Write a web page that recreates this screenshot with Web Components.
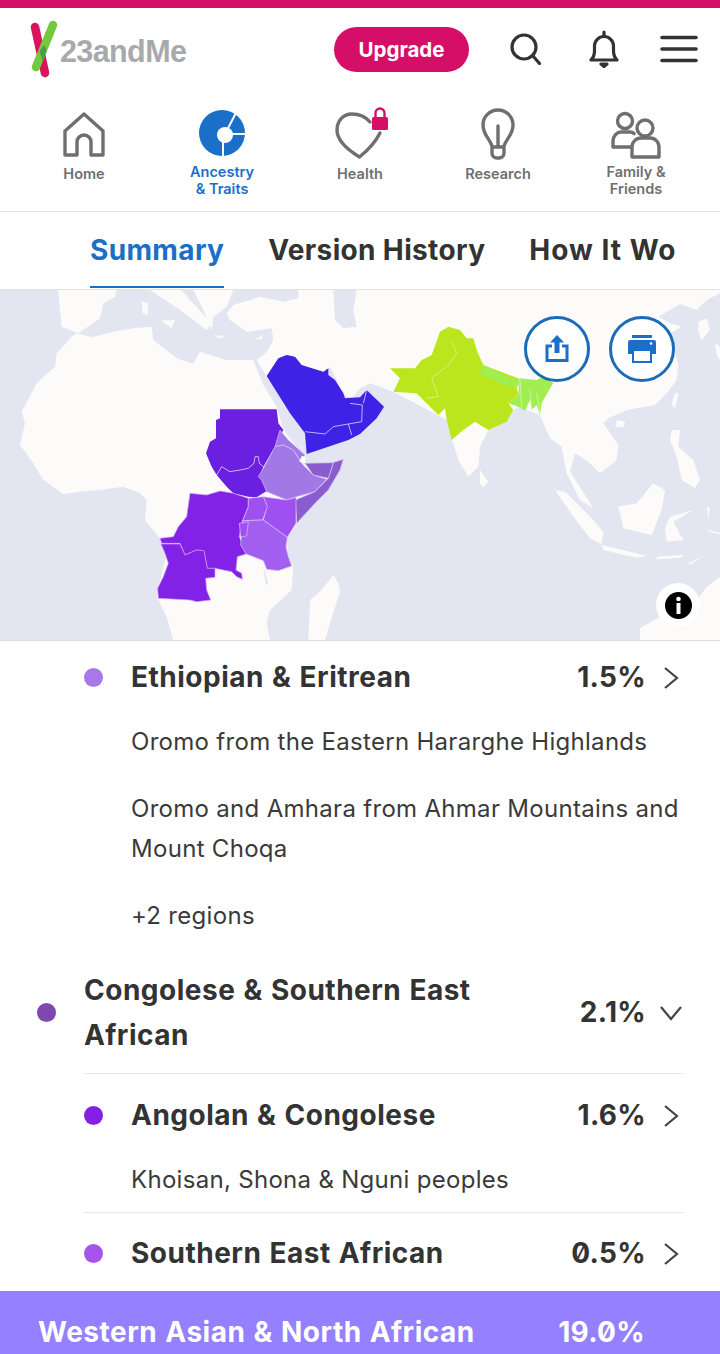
<!DOCTYPE html>
<html>
<head>
<meta charset="utf-8">
<title>Ancestry</title>
<style>
html, body { margin: 0; height: 1354px; overflow: hidden; background: #fff; }
body { font-family: Inter, "Liberation Sans", sans-serif; color: #333; }
.nav-icon { display: block; fill: none; overflow: visible; stroke: #6f6f6f; stroke-width: 3.4; stroke-linejoin: round; stroke-linecap: round; }
</style>
</head>
<body>
<app-header></app-header>
<nav-bar>
    <nav-item label="Home">
        <svg class="nav-icon" width="60" height="52" viewBox="0 0 60 52"><path d="M11 44V20L30 3l19 17v24H37V31a7 7 0 0 0-14 0v13z"/></svg>
    </nav-item>
    <nav-item label="Ancestry<br>&amp; Traits" active>
        <svg width="60" height="52" viewBox="0 0 60 52" style="display:block;overflow:visible">
            <circle cx="30" cy="22" r="23" fill="#1a70c8"/>
            <circle cx="33" cy="24" r="8" fill="#fff"/>
            <path d="M31 24v24M33 23h24M33 23L46 -2" stroke="#fff" stroke-width="2" fill="none"/>
        </svg>
    </nav-item>
    <nav-item label="Health">
        <svg class="nav-icon" width="60" height="52" viewBox="0 0 60 52"><path d="M40 11C35 5 29 3 22 3 13 3 7 10 7 19c0 10 11 20 22.500 27C37 40 45 32 50 22"/><rect x="42" y="6" width="16" height="13" rx="1.500" fill="#d50f67" stroke="none"/><path d="M45.500 7V2a4.500 4.500 0 0 1 9 0v5" stroke="#d50f67" stroke-width="2.400"/></svg>
    </nav-item>
    <nav-item label="Research">
        <svg class="nav-icon" width="60" height="52" viewBox="0 0 60 52"><path d="M24 35c-2-7-9-11-9-21a15 15 0 0 1 30 0c0 10-7 14-9 21v7a5 5 0 0 1-5 5h-2a5 5 0 0 1-5-5zM30 15v21M24 36h12"/></svg>
    </nav-item>
    <nav-item label="Family &amp;<br>Friends">
        <svg class="nav-icon" width="60" height="52" viewBox="0 0 60 52"><circle cx="19" cy="10" r="7.500"/><circle cx="39" cy="17" r="8"/><path d="M26 36H7v-6c0-5 4-9 8-9h9c1.500 0 3 .5 4 1.500M26 46V36c0-5 4-9 9-9h9c5 0 9 4 9 9v10z"/></svg>
    </nav-item>
</nav-bar>
<tab-bar>
    <tab-link active>Summary</tab-link>
    <tab-link>Version History</tab-link>
    <tab-link style="letter-spacing:1px">How It Works</tab-link>
</tab-bar>
<ancestry-map></ancestry-map>
<ancestry-list>
    <ancestry-row dot="#a678e8" pct="1.5%" indent>Ethiopian &amp; Eritrean</ancestry-row>
    <ancestry-note>Oromo from the Eastern Hararghe Highlands</ancestry-note>
    <ancestry-note>Oromo and Amhara from Ahmar Mountains and Mount Choqa</ancestry-note>
    <ancestry-note>+2 regions</ancestry-note>
    <ancestry-row dot="#7f47b0" pct="2.1%" open>Congolese &amp; Southern East African</ancestry-row>
    <ancestry-row dot="#8420e6" pct="1.6%" indent ruled first>Angolan &amp; Congolese</ancestry-row>
    <ancestry-note tight>Khoisan, Shona &amp; Nguni peoples</ancestry-note>
    <ancestry-row dot="#a555ec" pct="0.5%" indent ruled>Southern East African</ancestry-row>
</ancestry-list>
<ancestry-band pct="19.0%">Western Asian &amp; North African</ancestry-band>

<script>
class AppHeader extends HTMLElement {
    constructor() {
        super();
        this.attachShadow({mode: 'open'});
        this.shadowRoot.innerHTML = `
        <style>
        :host { display: block; border-top: 8px solid #d50f67; }
        .row { align-items: center; display: flex; height: 82px; padding-left: 29px; }
        .logo { align-items: center; display: flex; flex-grow: 1; padding-top: 2px; }
        .word { color: #a7a9ac; font-family: 'Liberation Sans', sans-serif; font-size: 30.5px; font-weight: 700; letter-spacing: -0.6px; margin-left: -1px; margin-top: 3px; }
        .upgrade { align-items: center; background: #d50f67; border-radius: 23px; color: #fff; display: flex; font-size: 20.5px; font-weight: 700; height: 45px; justify-content: center; margin-right: 41px; width: 135px; }
        svg.tool { display: block; fill: none; stroke: #333; stroke-width: 3.2; stroke-linecap: round; stroke-linejoin: round; }
        .search { margin-right: 47px; }
        .bell { margin-right: 40px; }
        </style>
        <div class="row">
            <div class="logo">
                <svg width="32" height="58" viewBox="0 0 32 58"><path d="M6 6l10 46" stroke="#d9145f" stroke-width="8.500" stroke-linecap="round"/><path d="M24 4L7 46" stroke="#74c83f" stroke-width="8.500" stroke-linecap="round"/><path d="M10.500 30l3.500 11 3.500-11 -2-6z" fill="#4a9a4f"/></svg>
                <span class="word">23andMe</span>
            </div>
            <div class="upgrade">Upgrade</div>
            <svg class="tool search" width="31" height="32" viewBox="0 0 31 32"><circle cx="14" cy="14" r="12"/><path d="M23 23l6.500 7.500"/></svg>
            <svg class="tool bell" width="32" height="38" viewBox="0 0 32 38"><path d="M3 30c3-3 3.500-5 3.500-9v-5a9.500 9.500 0 0 1 19 0v5c0 4 .5 6 3.500 9z"/><path d="M16 2v4"/><path d="M13 34h6l-3 2.500z" fill="#333"/></svg>
            <svg class="tool" width="38" height="28" viewBox="0 0 38 28" style="stroke-width:3.600"><path d="M2 2.500h34M2 14h34M2 25.500h34"/></svg>
            <span style="width:22px"></span>
        </div>`;
    }
}
customElements.define('app-header', AppHeader);

class NavBar extends HTMLElement {
    constructor() {
        super();
        this.attachShadow({mode: 'open'});
        this.shadowRoot.innerHTML = `
        <style>
        :host { border-bottom: 1px solid #e4e4e4; display: grid; grid-template-columns: repeat(5, 138px); height: 121px; padding: 0 15px; }
        </style>
        <slot></slot>`;
    }
}
customElements.define('nav-bar', NavBar);

class NavItem extends HTMLElement {
    constructor() {
        super();
        this.attachShadow({mode: 'open'});
        this.shadowRoot.innerHTML = `
        <style>
        :host { align-items: center; display: flex; flex-direction: column; padding-top: 21px; }
        .label { color: #6f6f6f; font-size: 14.5px; font-weight: 600; line-height: 17px; text-align: center; }
        .label.single { margin-top: 1.5px; }
        :host([active]) .label { color: #1a70c8; }
        </style>
        <slot></slot>
        <div class="label"></div>`;
    }

    connectedCallback() {
        const label = this.shadowRoot.querySelector('.label');
        const text = this.getAttribute('label');
        label.innerHTML = text;
        if(!text.includes('<br>'))
            label.classList.add('single');
    }
}
customElements.define('nav-item', NavItem);

class TabBar extends HTMLElement {
    constructor() {
        super();
        this.attachShadow({mode: 'open'});
        this.shadowRoot.innerHTML = `
        <style>
        :host { border-bottom: 1px solid #e4e4e4; box-sizing: border-box; display: block; height: 78px; overflow: hidden; padding-right: 44px; }
        .scroll { column-gap: 44px; display: flex; height: 100%; overflow: hidden; padding-left: 90px; }
        </style>
        <div class="scroll"><slot></slot></div>`;
    }
}
customElements.define('tab-bar', TabBar);

class TabLink extends HTMLElement {
    constructor() {
        super();
        this.attachShadow({mode: 'open'});
        this.shadowRoot.innerHTML = `
        <style>
        :host { align-items: center; border-bottom: 2px solid transparent; box-sizing: border-box; color: #333; display: flex; flex-shrink: 0; font-size: 28px; font-weight: 700; height: 76px; letter-spacing: .35px; padding-top: 2px; white-space: nowrap; }
        :host([active]) { border-bottom-color: #1a70c8; color: #1a70c8; }
        </style>
        <slot></slot>`;
    }
}
customElements.define('tab-link', TabLink);

class AncestryMap extends HTMLElement {
    constructor() {
        super();
        this.attachShadow({mode: 'open'});
        this.shadowRoot.innerHTML = `
        <style>
        :host { background: #e3e6f1; border-bottom: 1px solid #dcdcdc; display: block; height: 350px; overflow: hidden; position: relative; }
        svg.map { display: block; }
        .land { fill: #fcfbfa; }
        .sea { fill: #e3e6f1; }
        .line { fill: none; stroke: #ffffff; stroke-opacity: .65; stroke-width: 3; }
        .round { align-items: center; background: #fff; border: 3px solid #1a6cb8; border-radius: 50%; box-sizing: border-box; display: flex; height: 66px; justify-content: center; position: absolute; top: 26px; width: 66px; }
        .info { align-items: center; background: #fff; border-radius: 50%; display: flex; height: 44px; justify-content: center; left: 656px; position: absolute; top: 293px; width: 44px; }
        </style>
        <svg class="map" width="720" height="350" viewBox="0 0 2160 1050">
            <g class="land">
                <path d="M230 130L275 142 340 125 400 115 455 110 460 150 530 205 580 222 600 185 680 210 760 210 790 285 830 350 850 420 910 495 900 520 960 530 1030 510 1000 570 950 630 890 700 860 750 865 800 880 830 875 900 810 960 800 1000 810 1050 520 1050 500 980 470 920 490 830 500 800 480 745 435 690 440 630 420 610 370 590 300 600 240 605 190 612 130 570 100 520 60 465 75 400 65 365 110 280 165 230 170 190 215 140z"/>
                <path d="M1000 855L1015 880 1020 905 990 1000 975 1050 925 1050 930 930 960 905z"/>
                <path d="M175 0L350 0 345 20 310 40 300 85 235 130 185 110 180 60z"/>
                <path d="M450 0L540 60 620 120 635 100 570 30 545 0z"/>
                <path d="M580 0L700 0 680 50 640 80 635 120 610 60z"/>
                <path d="M425 35L445 40 443 75 428 70zM482 92L525 90 515 115z"/>
                <path d="M640 135L675 138 660 146zM765 148L790 135 785 148z"/>
                <path d="M680 70L700 45 780 20 850 35 895 25 895 0 2160 0 2160 10 2120 30 2090 60 2040 42 1975 80 2010 100 2045 110 2010 130 2035 225 2030 270 2000 310 1965 345 1880 360 1825 385 1810 400 1855 465 1850 510 1800 550 1770 520 1725 490 1710 545 1780 655 1740 630 1700 550 1685 470 1650 445 1620 375 1555 350 1465 420 1440 470 1435 530 1405 560 1375 510 1355 445 1340 390 1180 305 1110 280 1080 295 1060 320 1040 320 1025 300 990 230 985 235 900 400 800 260 770 210 800 185 820 150 815 115 740 125 690 90z"/>
                <path d="M2095 95L2120 85 2130 120 2105 150 2095 125zM2145 160L2160 170 2160 210 2150 195z"/>
                <path d="M1850 390L1875 395 1870 410 1848 412zM2025 310L2035 310 2025 355 2015 345z"/>
                <path d="M1440 540L1465 575 1450 592 1440 580z"/>
                <path d="M1665 600L1695 605 1780 690 1810 725 1805 762 1770 745 1720 680z"/>
                <path d="M1805 765L1940 797 1910 803 1810 780z"/>
                <path d="M1960 580L1995 600 1985 660 1955 735 1870 715 1855 650 1910 640z"/>
                <path d="M1995 715L2010 680 2080 660 2020 695 2050 750 2000 755z"/>
                <path d="M2015 420L2040 420 2035 470 2080 510 2100 570 2085 595 2045 570 2030 500 2010 450z"/>
                <path d="M1970 800L2050 795 2045 803 1970 808zM2065 820L2110 797 2070 825zM2120 650L2130 655 2125 685zM2125 720L2160 728 2160 732 2125 725z"/>
                <path d="M1920 1050L1920 1015 1980 980 2080 945 2120 890 2160 860 2160 1050z"/>
            </g>
            <path class="sea" d="M1000 0L1070 0 1060 60 1070 110 1030 115 1005 90zM790 830L805 880 798 885 792 850z"/>

            <path fill="#4022e6" d="M835 205L860 195 885 200 905 225 970 245 985 235 985 255 1005 270 1030 310 1035 325 1080 322 1100 300 1152 350 1130 385 1080 432 1045 450 985 470 920 492 915 430 870 370 800 258z"/>
            <path class="line" d="M915 425L975 432 1000 410 1045 402 1055 435M1045 402L1085 395 1087 345 1050 340M1100 300L1090 340"/>

            <path fill="#6b1fe0" d="M660 358L830 358 835 400 850 420 825 470 790 530 785 545 805 600 770 622 745 620 700 610 680 590 650 555 635 530 618 490 630 455 648 445 648 390 660 385z"/>
            <path class="line" d="M650 555L665 530 690 545 720 540 745 535 762 520 765 500 775 500 778 520 790 530"/>
            <path fill="#8222e6" stroke="#c9a5f2" stroke-width="2" d="M570 610L620 615 660 603 700 610 745 625 745 650 725 700 718 740 738 792 712 800 708 840 725 850 727 868 710 860 695 845 645 835 622 835 612 785 590 780 555 795 540 760 485 760 480 745 520 740 535 710 560 680z"/>
            <path fill="#8222e6" stroke="#c9a5f2" stroke-width="2" d="M483 762L540 762 555 795 590 780 612 782 622 835 645 835 645 862 617 865 620 900 632 930 590 935 570 930 475 925 473 895 490 860 505 820 495 790z"/>
            <g stroke="#d8c4f5" stroke-width="2">
                <path fill="#a178e6" d="M840 420L865 450 915 495 900 510 880 480 850 465 825 470z"/>
                <path fill="#a178e6" d="M825 470L850 465 880 480 905 520 915 530 940 555 980 568 945 605 890 620 860 630 800 605 785 570 775 560 790 535z"/>
                <path fill="#8a5ccf" d="M915 520L960 530 1030 508 1020 540 985 600 945 640 890 700 886 630 945 605 985 565 1000 520z"/>
                <path fill="#8a5ccf" d="M915 520L1000 518 985 565 940 555z"/>
                <path fill="#a050f0" d="M790 620L860 630 888 622 888 700 862 742 790 690 800 650z"/>
                <path fill="#a050f0" d="M745 625L790 620 802 650 788 690 728 692 745 650z"/>
                <path fill="#a35ff0" d="M728 692L790 690 862 742 858 770 865 800 875 828 835 842 800 838 790 812 738 792 722 765z"/>
                <path fill="#a050f0" d="M718 700L745 695 740 738 722 740z"/>
            </g>
            <path fill="#fcfbfa" d="M905 498L918 500 915 520 898 515z"/>

            <g transform="translate(1080 0)">
                <path fill="#bbe51d" d="M240 125L265 110 300 120 320 145 340 145 352 185 370 225 475 265 470 290 475 315 445 340 460 360 440 395 385 420 345 395 310 420 275 450 260 390 255 355 235 375 205 345 170 310 100 305 120 265 90 235 165 235 185 210 215 195z"/>
                <path fill="#a0ee50" d="M370 225L450 265 478 268 475 290 430 285 360 250z"/>
                <path fill="#a0ee50" d="M478 265L530 270 545 262 580 278 545 340 540 375 530 345 515 360 510 330 495 362 475 350 445 340 475 315z"/>
                <path class="line" style="stroke-width:2" d="M275 155L290 190 265 225 215 265 235 320 200 325M480 268L485 355M510 300L515 360M530 310L540 370"/>
            </g>
        </svg>
        <div class="round" style="left:524px">
            <svg width="24" height="28" viewBox="0 0 24 28"><path fill="#1a70c8" d="M12 0l7 7.500h-4.500V18h-5V7.500H5z"/><path fill="none" stroke="#1a70c8" stroke-width="3" d="M7 11H2v14.500h20V11h-5"/></svg>
        </div>
        <div class="round" style="left:609px">
            <svg width="28" height="28" viewBox="0 0 28 28"><path fill="#1a70c8" d="M4 0h20v3H4zM2 5h24a2 2 0 0 1 2 2v12h-5v-5H5v5H0V7a2 2 0 0 1 2-2z"/><path fill="none" stroke="#1a70c8" stroke-width="2" d="M5 15h18v12H5z"/><circle cx="23" cy="8.500" r="1.300" fill="#fff"/></svg>
        </div>
        <div class="info">
            <svg width="27" height="27" viewBox="0 0 27 27"><circle cx="13.500" cy="13.500" r="13.500" fill="#000"/><circle cx="13.500" cy="7" r="2.300" fill="#fff"/><path fill="#fff" d="M11.500 11h4v11h-4z"/></svg>
        </div>`;
    }
}
customElements.define('ancestry-map', AncestryMap);

class AncestryList extends HTMLElement {
    constructor() {
        super();
        this.attachShadow({mode: 'open'});
        this.shadowRoot.innerHTML = `
        <style>
        :host { display: block; height: 650px; overflow: hidden; }
        </style>
        <slot></slot>`;
    }
}
customElements.define('ancestry-list', AncestryList);

class AncestryRow extends HTMLElement {
    constructor() {
        super();
        this.attachShadow({mode: 'open'});
        this.shadowRoot.innerHTML = `
        <style>
        :host { color: #333; display: block; padding: 0 37px; }
        :host([indent]) { padding-left: 84px; }
        .row { align-items: center; display: flex; padding: 14px 0 22px; }
        :host([ruled]) .row { border-top: 1px solid #e6e8e8; padding: 18px 0 23px; }
        :host([first]) .row { border-top: none; padding: 19px 0 22px; }
        :host([open]) .row { border-bottom: 1px solid #e6e8e8; margin-left: 47px; padding: 4.500px 0 15.500px; position: relative; }
        .dot { background: var(--dot); border-radius: 50%; flex: none; height: 19px; margin-right: 28px; width: 19px; }
        :host([open]) .dot { left: -47px; margin: -15px 0 0; position: absolute; top: 50%; }
        .name { flex-grow: 1; font-size: 28px; font-weight: 700; letter-spacing: .5px; line-height: 45px; word-spacing: 1px; }
        .pct { font-feature-settings: 'zero'; font-size: 28px; font-weight: 700; letter-spacing: .3px; line-height: 45px; margin-left: 20px; white-space: nowrap; }
        .chev { flex: none; fill: none; margin-left: 17px; margin-right: 4px; stroke: #444; stroke-width: 2.200; }
        :host([open]) .chev { margin-left: 13px; margin-right: 0; }
        </style>
        <div class="row">
            <span class="dot"></span>
            <span class="name"><slot></slot></span>
            <span class="pct"></span>
            <svg class="chev" width="16" height="24" viewBox="0 0 16 24"><path d="M2 2l12 10L2 22"/></svg>
        </div>`;
    }

    connectedCallback() {
        this.shadowRoot.querySelector('.dot').style.setProperty('--dot', this.getAttribute('dot'));
        this.shadowRoot.querySelector('.pct').textContent = this.getAttribute('pct');
        if(this.hasAttribute('open')) {
            const chev = this.shadowRoot.querySelector('.chev');
            chev.setAttribute('width', '24');
            chev.setAttribute('height', '16');
            chev.setAttribute('viewBox', '0 0 24 16');
            chev.querySelector('path').setAttribute('d', 'M2 2l10 12L22 2');
        }
    }
}
customElements.define('ancestry-row', AncestryRow);

class AncestryNote extends HTMLElement {
    constructor() {
        super();
        this.attachShadow({mode: 'open'});
        this.shadowRoot.innerHTML = `
        <style>
        :host { color: #3a3a3a; display: block; font-size: 24px; letter-spacing: .3px; line-height: 40px; padding: 0 37px 27px 131px; }
        :host([tight]) { padding-bottom: 12px; }
        </style>
        <slot></slot>`;
    }
}
customElements.define('ancestry-note', AncestryNote);

class AncestryBand extends HTMLElement {
    constructor() {
        super();
        this.attachShadow({mode: 'open'});
        this.shadowRoot.innerHTML = `
        <style>
        :host { align-items: flex-start; background: #9580ff; box-sizing: border-box; color: #fff; display: flex; font-size: 28px; font-weight: 700; height: 63px; line-height: 45px; padding: 19px 75px 0 38px; position: absolute; top: 1291px; width: 720px; }
        .name { flex-grow: 1; letter-spacing: .5px; word-spacing: 1px; }
        .pct { font-feature-settings: 'zero'; letter-spacing: .3px; }
        </style>
        <span class="name"><slot></slot></span>
        <span class="pct"></span>`;
    }

    connectedCallback() {
        this.shadowRoot.querySelector('.pct').textContent = this.getAttribute('pct');
    }
}
customElements.define('ancestry-band', AncestryBand);
</script>
</body>
</html>
